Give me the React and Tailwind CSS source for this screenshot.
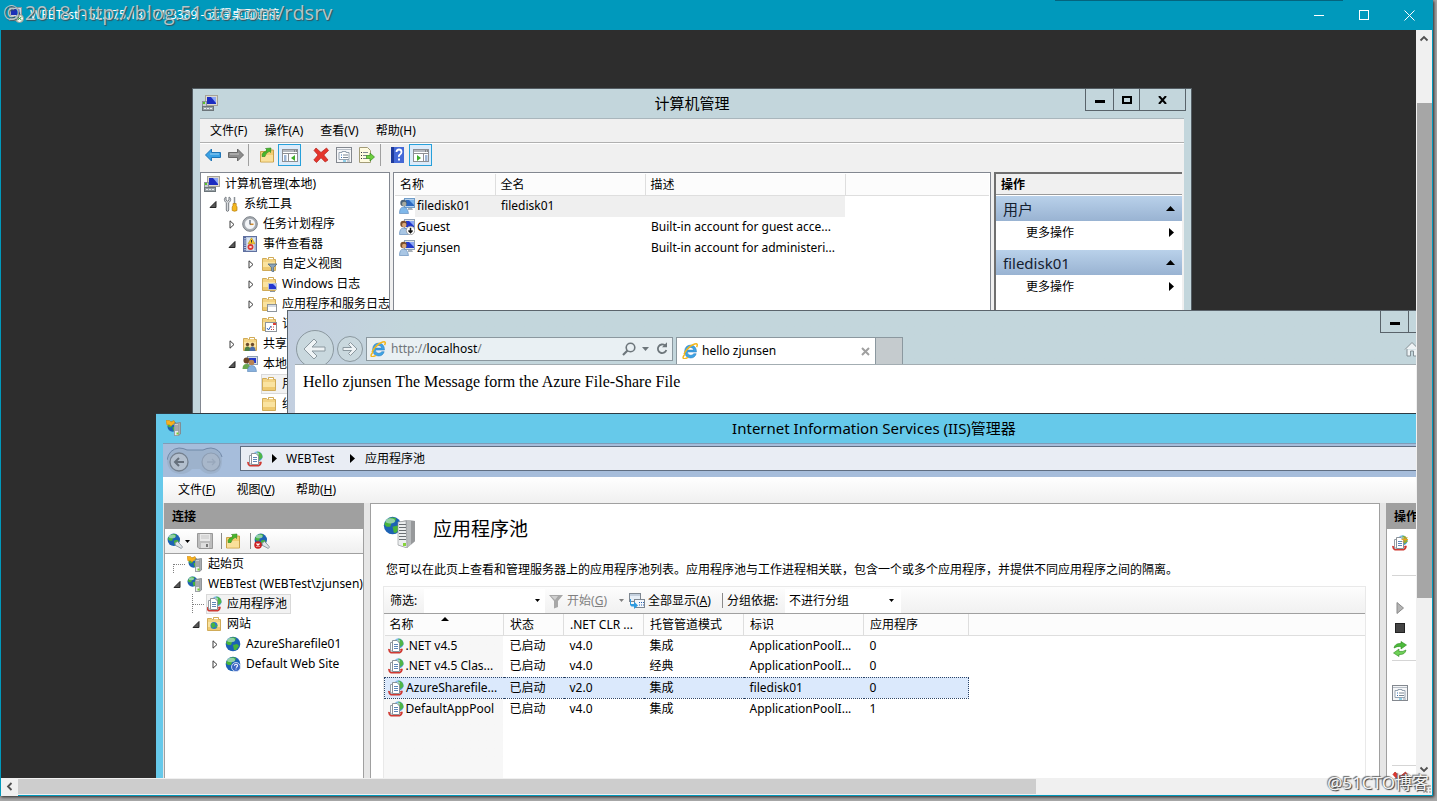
import React from "react";

/* ---------- icons ---------- */

function Svg({ size = 16, box = 16, children }) {
  return (
    <svg width={size} height={size} viewBox={`0 0 ${box} ${box}`} className="block shrink-0" aria-hidden="true">
      {children}
    </svg>
  );
}

const ComputerIcon = () => (
  <Svg>
    <rect x="3.500" y="0.500" width="12" height="10" fill="#dedacf" stroke="#a5a297" />
    <rect x="5" y="2" width="9" height="7" fill="#1c2cc0" />
    <path d="M9 2h5v6z" fill="#8fa8f4" />
    <rect x="0.500" y="6.500" width="4" height="5" fill="#c4cad0" stroke="#8b9297" />
    <rect x="1" y="7" width="2" height="2" fill="#58c22a" />
    <rect x="0.500" y="11.500" width="11" height="4" fill="#98a1a6" stroke="#6c757a" />
    <path d="M2 13.500h2M5 13.500h2M8 13.500h2" stroke="#e6ecef" />
  </Svg>
);

const RemoteIcon = () => (
  <Svg>
    <rect x="1.500" y="0.500" width="12" height="9" fill="#d7dbe0" stroke="#8b949e" />
    <rect x="3" y="2" width="9" height="6" fill="#1d2fb8" />
    <path d="M8 2h4v4z" fill="#9fb2f0" />
    <path d="M2 11h7l-1 3H1z" fill="#a4adb5" />
    <circle cx="11.500" cy="11.500" r="4" fill="#f4f6f2" stroke="#8c948c" />
    <path d="M9.500 10l2 1.500-2 1.500M13.500 10l-2 1.500 2 1.500" stroke="#2f9a32" fill="none" />
  </Svg>
);

const ToolsIcon = () => (
  <Svg>
    <path d="M3 1v3l1.500 1.200L6 4V1c2 .8 2.600 4-.3 5.600V14c0 1.800-2.400 1.800-2.400 0V6.600C.6 5 1 1.800 3 1z" fill="#d9dcdf" stroke="#777c82" />
    <path d="M11.500 1v7" stroke="#8a9096" strokeWidth="1.500" />
    <path d="M10 7.500h3.200v2L14 11v3.500q-2.400 1.500-4.800 0V11l.8-1.500z" fill="#f5b81f" stroke="#b57c0b" strokeWidth="0.700" />
  </Svg>
);

const ClockIcon = () => (
  <Svg>
    <circle cx="8" cy="8" r="7.300" fill="#a9aeb4" stroke="#7b8188" />
    <circle cx="8" cy="8" r="5.500" fill="#f3f5f8" stroke="#8d949b" strokeWidth="0.600" />
    <path d="M8 8.300h3.500" stroke="#d08a2a" fill="none" strokeWidth="1.500" />
    <path d="M8 4v4.500" stroke="#5b6470" strokeWidth="1.300" />
  </Svg>
);

const EventIcon = () => (
  <Svg>
    <rect x="1.500" y="0.500" width="13" height="15" fill="#b9c8e0" stroke="#5f70a0" />
    <path d="M3 1v14" stroke="#56669a" strokeWidth="2" strokeDasharray="1.200 1" />
    <path d="M5 2h8v12H5z" fill="#dbe5f2" />
    <path d="M9.500 1.800l3.500 6H6z" fill="#f7c92c" stroke="#b78f10" strokeWidth="0.600" />
    <path d="M9.500 4v2.500" stroke="#333" />
    <circle cx="8.500" cy="11" r="3" fill="#dc3a35" />
    <path d="M7.500 10l2 2m0-2l-2 2" stroke="#fff" />
    <path d="M12 9h2M12 11h2M12 13h2" stroke="#6e86b8" strokeWidth="0.700" />
  </Svg>
);

function FolderIcon({ kind }) {
  return (
    <Svg>
      <path d="M1.500 14.500v-12h4l1 1h1v-2h5v2h2v11z" fill="#f3d382" stroke="#d0ab58" />
      <path d="M8 2.500h4" stroke="#fff" />
      <path d="M2 6h12v8H2z" fill="#fae3a0" />
      <path d="M2 11h12v3H2z" fill="#efca70" />
      {kind === "filter" && <path d="M7 8h9l-3.400 3.500V16l-2.200-1.200v-3.300z" fill="#8aa2b8" stroke="#52697e" strokeWidth="0.800" />}
      {kind === "screen" && (
        <g>
          <rect x="7.500" y="7.500" width="8" height="6" fill="#2437cf" stroke="#b9c2cc" />
          <path d="M12 8h3v3z" fill="#a7b8f5" />
          <path d="M9 15.500h5" stroke="#8b949e" />
        </g>
      )}
      {kind === "window" && (
        <g>
          <rect x="6.500" y="8.500" width="9" height="7" fill="#fff" stroke="#8d949b" />
          <path d="M7 10h8" stroke="#aab6c6" />
        </g>
      )}
      {kind === "calendar" && (
        <g>
          <rect x="4.500" y="6.500" width="11" height="9" fill="#fff" stroke="#8d949b" />
          <path d="M12 8h3" stroke="#e04038" strokeWidth="2" />
          <path d="M6 12l1.500 2L10 10" stroke="#2c62b8" fill="none" />
          <path d="M10 11h1M12 11h1M10 13.500h1M12 13.500h1" stroke="#c04040" />
        </g>
      )}
      {kind === "people" && (
        <g>
          <circle cx="5.500" cy="8.500" r="1.700" fill="#6b4a2c" />
          <circle cx="10.500" cy="8.500" r="1.700" fill="#6b4a2c" />
          <path d="M2.500 15q0-4.500 3-4.500t3 4.500z" fill="#4b7f45" />
          <path d="M7.500 15q0-4.500 3-4.500t3 4.500z" fill="#4c6ea8" />
        </g>
      )}
      {kind === "globe" && (
        <g>
          <circle cx="8" cy="9.500" r="3.500" fill="#2b7cc8" />
          <path d="M5 8q3-3 4 0t-3 4zM9 10l2.500-1-1 3z" fill="#49b53c" />
        </g>
      )}
    </Svg>
  );
}

const UserIcon = ({ down, pale }) => (
  <Svg>
    <rect x="5.500" y="0.500" width="10" height="9" fill={pale ? "#b5d2ee" : "#dfe4ea"} stroke={pale ? "#6f9cc8" : "#8fa0b4"} />
    <rect x="7" y="2" width="8" height="6" fill={pale ? "#2c68c0" : "#2238cc"} />
    <path d="M10 2h5v5z" fill={pale ? "#7cb4ec" : "#8ea9f5"} />
    <path d="M9 10h4l1 2H9z" fill="#a8b0b8" />
    <circle cx="4.500" cy="5" r="3.200" fill={pale ? "#4c6378" : "#7a4e2c"} />
    <circle cx="5.200" cy="6" r="2.200" fill={pale ? "#a8aba0" : "#d9a777"} />
    <path d="M0.500 15.500q0-6.500 4-6.500t5 6.500z" fill={pale ? "#80b8ea" : "#a9c6e4"} stroke="#5583b5" strokeWidth="0.600" />
    {down && (
      <g>
        <circle cx="11.500" cy="11.500" r="4.200" fill="#fff" stroke="#8a8a8a" strokeWidth="0.700" />
        <path d="M11.500 8.800v4.500M9.500 11.500l2 2.200 2-2.200" stroke="#111" strokeWidth="1.500" fill="none" />
      </g>
    )}
  </Svg>
);

const UsersIcon = () => (
  <Svg>
    <rect x="5.500" y="0.500" width="10" height="8" fill="#d7dfe8" stroke="#8fa0b4" />
    <rect x="7" y="2" width="7" height="5" fill="#2238cc" />
    <circle cx="4.500" cy="4.500" r="3" fill="#6b4526" />
    <circle cx="9.500" cy="6.500" r="2.800" fill="#b98352" />
    <path d="M0.500 13q0-5 4-5t4 5z" fill="#6aa84f" />
    <path d="M5.500 15.500q0-6 4.200-6t4.800 6z" fill="#86b0de" stroke="#5583b5" strokeWidth="0.600" />
  </Svg>
);

const ArrowIcon = ({ color, edge, flip }) => (
  <Svg>
    <path
      d={flip ? "M15.500 8L9.500 2v3.500H.5v5h9V14z" : "M.5 8l6-6v3.500h9v5h-9V14z"}
      fill={color}
      stroke={edge}
    />
    <path d={flip ? "M2 7h9" : "M5 7h9"} stroke="#fff" opacity="0.500" />
  </Svg>
);

const FolderUpIcon = () => (
  <Svg>
    <path d="M1.500 15V4.500h5l1-1.500h7V15z" fill="#f2cd72" stroke="#c9a24a" />
    <path d="M2 8h12v6.500H2z" fill="#fae09a" />
    <path d="M3 9.500q0-5 4.500-5V2.500L6.500 1.500 12 1l-.5 4.500-1.200-1.200Q6.500 6 6 9.500z" fill="#46b82c" stroke="#2a851a" strokeWidth="0.600" />
  </Svg>
);

const PaneIcon = ({ right }) => (
  <Svg>
    <rect x="0.500" y="2.500" width="15" height="12" fill="#fff" stroke="#8d8f93" />
    <path d="M1 4h14" stroke="#b4b8be" strokeWidth="2" />
    <path d="M1 6.500h14" stroke="#8d8f93" />
    <path d="M12 4h1M14 4h1" stroke="#555" />
    {right ? (
      <g>
        <path d="M10.500 7v7" stroke="#8d8f93" />
        <path d="M12 9h2.500M12 11h2.500M12 13h2.500" stroke="#3d6fae" />
        <path d="M4 8l4 3-4 3z" fill="#3fae2a" />
      </g>
    ) : (
      <g>
        <path d="M6.500 7v7" stroke="#8d8f93" />
        <path d="M2 9h2.500M2 11h2.500M2 13h2.500" stroke="#3d6fae" />
        <path d="M13 8l-4 3 4 3z" fill="#3fae2a" />
      </g>
    )}
  </Svg>
);

const DeleteIcon = () => (
  <Svg>
    <path d="M3 1l5 4.500L13.500 1 15.500 3.500 10.800 8 15 13l-2.800 2L8 10.800 3.500 15.500 0.800 13 5 8 1 3.500z" fill="#e5352c" stroke="#b3241d" strokeWidth="0.700" />
  </Svg>
);

const PropsIcon = () => (
  <Svg>
    <rect x="0.500" y="0.500" width="15" height="15" fill="#f5f6f8" stroke="#83888f" />
    <path d="M1 2.500h14" stroke="#b9c0c8" />
    <path d="M3 5.500h3v-1h4v1h3v7H3z" fill="#fff" stroke="#8a98a8" strokeWidth="0.900" />
    <path d="M5 8h1M5 10.500h1" stroke="#2f6fb5" />
    <path d="M7 8h5M7 10.500h5" stroke="#7b8794" />
    <path d="M7 14h3" stroke="#2aa7d8" />
    <path d="M11 14h3" stroke="#9aa3ad" />
  </Svg>
);

const ExportIcon = () => (
  <Svg>
    <path d="M.5.500h8l3 3v12H.5z" fill="#fffbe0" stroke="#a39c78" />
    <path d="M2 5.500h1M2 8.500h1M2 11.500h1" stroke="#333" />
    <path d="M4 5.500h5M4 8.500h4M4 11.500h4" stroke="#7d8490" />
    <path d="M7.500 8.500H11V6l4.500 4-4.500 4v-2.500H7.500z" fill="#6ccf3d" stroke="#348a1a" strokeWidth="0.700" />
  </Svg>
);

const HelpIcon = () => (
  <Svg>
    <rect x="1" y="0" width="13" height="16" fill="#4468d6" />
    <rect x="1" y="0" width="3" height="16" fill="#1e3a9c" />
    <path d="M6.500 5q0-2.500 2.500-2.500T11.500 5q0 1.500-1.500 2.500T9 10" stroke="#fff" strokeWidth="1.800" fill="none" />
    <rect x="8" y="11.500" width="2" height="2" fill="#fff" />
  </Svg>
);

const IeIcon = () => (
  <Svg>
    <path d="M14.500 9H5.300q.4 3.300 3.500 3.300 1.900 0 2.800-1.600h2.600Q12.800 15 8.600 15 2.800 14.800 2.600 8.500 2.900 2.300 8.600 2.100q5.800.3 5.900 6.900zM5.400 7.100h6.300Q11.400 4.500 8.700 4.400 5.900 4.500 5.400 7.100z" fill="#3fa4e4" stroke="#2477bd" strokeWidth="0.500" fillRule="evenodd" />
    <path d="M3.200 10.700C-.8 15.500 1.300 17 6 14.300M2 11C4.500 6 9 2.300 12.700 1c3-.9 3 1 1.900 3.200" stroke="#f3b71b" strokeWidth="1.500" fill="none" />
  </Svg>
);

const Ball = () => (
  <g>
    <circle cx="8" cy="8" r="7.300" fill="#1c62b4" />
    <path d="M3 3q4-3 8-1l-1 3-3 1-1 3-3 0-2-2zM8 9l4-1 2 2-3 4-2 0z" fill="#47b43a" />
    <ellipse cx="6" cy="4" rx="4" ry="2.200" fill="#cdeafc" opacity="0.550" />
  </g>
);

const GlobeIcon = ({ help }) => (
  <Svg>
    <Ball />
    {help && (
      <g>
        <circle cx="11" cy="11" r="4.500" fill="#3c66c4" stroke="#e6edfa" strokeWidth="0.800" />
        <path d="M9.500 9.800q0-1.500 1.500-1.500t1.500 1.200-1.500 2" stroke="#fff" fill="none" strokeWidth="1.100" />
        <rect x="10.500" y="12.500" width="1" height="1" fill="#fff" />
      </g>
    )}
  </Svg>
);

const GlobePlugIcon = ({ off }) => (
  <Svg>
    <g transform="scale(0.850)">
      <Ball />
    </g>
    <path d="M8 10l2.500-1.500 2.500 2.500 2.500 3-1.200 1.500-3.300-1.800-2.500-1.200z" fill="#dfe4e8" stroke="#7f8a93" strokeWidth="0.800" />
    {off && (
      <g>
        <circle cx="4" cy="12" r="3.800" fill="#cf2020" />
        <path d="M2.500 10.500l3 3m0-3l-3 3" stroke="#fff" strokeWidth="1.300" />
      </g>
    )}
  </Svg>
);

const ServerIcon = () => (
  <Svg size={32} box={32}>
    <g transform="scale(1.200)">
      <Ball />
    </g>
    <path d="M15 6l9-2 8 1v20l-8 7-9-3z" fill="#a2a5a8" />
    <path d="M24 4l8 1v20l-8 7z" fill="#b9bcbe" />
    <path d="M28 5l4 0v20l-4 3.500z" fill="#97999b" />
    <path d="M15 6l8-1 1 27-9-3z" fill="#eceeef" stroke="#8d9194" strokeWidth="0.600" />
    <path d="M16 8.500h7M16 11.500h7M16 14.500h7M16 17.500h7M16 20.500h7M16 23.500h7" stroke="#6a6f73" />
    <rect x="20" y="27" width="3" height="3" fill="#86d43a" />
  </Svg>
);

const SmallServerIcon = ({ star }) => (
  <Svg>
    <g transform={star ? "translate(1 1) scale(0.700)" : "scale(0.700)"}>
      <Ball />
    </g>
    {star && (
      <path d="M0 .5h3.500L5 2l3-1.500L9 3 6.500 4.500 5 6 3.500 4.500 1 5z" fill="#f7b01e" stroke="#d68d0c" strokeWidth="0.600" />
    )}
    <path d="M8.500 3.500l6-1v11.500l-2 1.500h-4z" fill="#a9adb1" stroke="#7f8387" strokeWidth="0.800" />
    <path d="M8.500 4h4v11.500h-4z" fill="#e8eaec" stroke="#888d91" strokeWidth="0.600" />
    <path d="M9 6h3.200M9 8h3.200M9 10h3.200" stroke="#63686d" />
    <rect x="10.500" y="12.500" width="2" height="2" fill="#76cf2c" />
  </Svg>
);

const PoolIcon = ({ star }) => (
  <Svg>
    <circle cx="10.500" cy="5.500" r="5" fill="#4b9ddb" />
    <path d="M10.500 .5q5 1 5 6L12.500 9 10 4z" fill="#4fb648" />
    <ellipse cx="9" cy="2.800" rx="3" ry="1.500" fill="#d5ecfb" opacity="0.600" />
    <path d="M1 11q-.5 2.500 2 3.700h8.500q2.500-1 2.500-3.700" stroke="#cf3a33" strokeWidth="1.500" fill="none" />
    <path d="M.5 11.500l2.500-.5v3zM14.500 10.500l-2.500.5 1 3z" fill="#cf3a33" />
    <path d="M2.500 4.500h5v8.500h-5z" fill="#fff" stroke="#969da4" />
    <path d="M4.500 2.500h4.500l2.500 2.500v8.500h-7z" fill="#fff" stroke="#8b9299" />
    <path d="M6 6.500h4M6 8.500h4M6 10.500h4" stroke="#5f86b8" />
    {star && <path d="M13 1v7M9.500 4.500h7M10.500 2l5 5M15.500 2l-5 5" stroke="#f3a21a" strokeWidth="0.900" />}
  </Svg>
);

const SaveIcon = () => (
  <Svg>
    <path d="M.5.500h15v15H2L.5 14z" fill="#bdbdbd" stroke="#989898" />
    <rect x="3" y="1" width="10" height="7" fill="#e9e9e9" />
    <path d="M4 3h8M4 5h8" stroke="#c6c6c6" />
    <rect x="4" y="10" width="8" height="5" fill="#dedede" />
    <rect x="9" y="11" width="2" height="3" fill="#777" />
  </Svg>
);

const FunnelIcon = () => (
  <Svg>
    <path d="M1 2h14l-5 6v6l-4 1.500V8z" fill="#a7a7a7" />
    <path d="M3 3h7L7 7z" fill="#cfcfcf" />
  </Svg>
);

const ShowAllIcon = () => (
  <Svg>
    <rect x="0.500" y="0.500" width="11" height="8" fill="#e6eef7" stroke="#7e8791" />
    <path d="M1 2h10" stroke="#9fb0c4" />
    <rect x="5.500" y="6.500" width="10" height="8" fill="#f5f8fc" stroke="#7e8791" />
    <path d="M10 9.500h1M12 9.500h1M14 9.500h1M10 12h1M12 12h1M14 12h1" stroke="#2a62b0" />
    <path d="M2 6v5h3V8.500l4 4L5 16v-2.500H2.500L1 12V6z" fill="#2f9be0" />
  </Svg>
);

const RecycleIcon = () => (
  <Svg>
    <path d="M2 7q1-5 7-4.500L9 .5 14.500 4 9 8V5.500Q5 5 2 7z" fill="#4cba3a" stroke="#2c8a1f" strokeWidth="0.600" />
    <path d="M14 9q-1 5-7 4.500v2L1.500 12 7 8v2.500q4 .5 7-1.500z" fill="#6fd157" stroke="#2c8a1f" strokeWidth="0.600" />
  </Svg>
);

const Caret = ({ color = "#000" }) => (
  <svg width="5" height="3" viewBox="0 0 5 3" className="block shrink-0" aria-hidden="true">
    <path d="M0 0h5L2.500 3z" fill={color} />
  </svg>
);
const UpTri = () => (
  <svg width="9" height="5" viewBox="0 0 9 5" className="block shrink-0" aria-hidden="true">
    <path d="M0 5L4.500 0 9 5z" fill="#000" />
  </svg>
);
const RightTri = () => (
  <svg width="5" height="9" viewBox="0 0 5 9" className="block shrink-0" aria-hidden="true">
    <path d="M0 0l5 4.500L0 9z" fill="#000" />
  </svg>
);

function Twisty({ state }) {
  if (!state) return null;
  return (
    <svg width="8" height="9" viewBox="0 0 8 9" className="block" aria-hidden="true">
      {state === "open" ? (
        <path d="M7 1.500v6H1z" fill="#595959" stroke="#262626" />
      ) : (
        <path d="M2 .8v7.400l4-3.700z" fill="#fff" stroke="#3c3c3c" />
      )}
    </svg>
  );
}

/* ---------- shared pieces ---------- */

const indents = ["pl-[3px]", "pl-[22px]", "pl-[41px]", "pl-[60px]"];

function TreeRow({ depth, twisty, noSlot, icon, label, selected, dotted }) {
  return (
    <li className={`flex h-5 items-center whitespace-nowrap ${indents[depth]}`}>
      {!noSlot && (
        <span className="flex w-[19px] shrink-0 items-center">
          <span className="flex w-[18px] justify-center">
            {twisty ? (
              <Twisty state={twisty} />
            ) : dotted ? (
              <svg width="12" height="20" viewBox="0 0 12 20" className="ml-1 block" aria-hidden="true">
                <path d={dotted === "first" ? "M.5 10v10M1 10.500h11" : "M.5 0v20M1 10.500h11"} stroke="#808080" strokeDasharray="1 1" fill="none" />
              </svg>
            ) : null}
          </span>
        </span>
      )}
      <button
        type="button"
        className={`flex h-5 items-center gap-[5px] pr-1 ${selected ? "bg-[#f2f2f2] outline outline-1 -outline-offset-1 outline-[#d9d9d9]" : ""}`}
      >
        {icon}
        <span>{label}</span>
      </button>
    </li>
  );
}

function ToolButton({ label, active, children }) {
  return (
    <button
      type="button"
      aria-label={label}
      className={`flex h-[22px] w-[23px] shrink-0 items-center justify-center ${active ? "border border-[#26a0da] bg-[#dcebfa]" : ""}`}
    >
      {children}
    </button>
  );
}

function CaptionButtons({ edge }) {
  return (
    <div className={`flex h-[22px] self-start justify-self-end border-x border-b ${edge}`}>
      <button type="button" aria-label="最小化" className={`flex w-[28px] items-center justify-center border-r ${edge}`}>
        <span className="mt-1 h-[3px] w-[10px] bg-black" />
      </button>
      <button type="button" aria-label="最大化" className={`flex w-[26px] items-center justify-center border-r ${edge}`}>
        <span className="h-2 w-[10px] border-2 border-black" />
      </button>
      <button type="button" aria-label="关闭" className="flex w-[45px] items-center justify-center">
        <svg width="9" height="8" viewBox="0 0 9 8" aria-hidden="true">
          <path d="M1 0l7 8M8 0L1 8" stroke="#000" strokeWidth="2" />
        </svg>
      </button>
    </div>
  );
}

/* ---------- computer management ---------- */

const manageTree = [
  { depth: 0, noSlot: true, icon: <ComputerIcon />, label: "计算机管理(本地)" },
  { depth: 0, twisty: "open", icon: <ToolsIcon />, label: "系统工具" },
  { depth: 1, twisty: "closed", icon: <ClockIcon />, label: "任务计划程序" },
  { depth: 1, twisty: "open", icon: <EventIcon />, label: "事件查看器" },
  { depth: 2, twisty: "closed", icon: <FolderIcon kind="filter" />, label: "自定义视图" },
  { depth: 2, twisty: "closed", icon: <FolderIcon kind="screen" />, label: "Windows 日志" },
  { depth: 2, twisty: "closed", icon: <FolderIcon kind="window" />, label: "应用程序和服务日志" },
  { depth: 2, icon: <FolderIcon kind="calendar" />, label: "订阅" },
  { depth: 1, twisty: "closed", icon: <FolderIcon kind="people" />, label: "共享文件夹" },
  { depth: 1, twisty: "open", icon: <UsersIcon />, label: "本地用户和组" },
  { depth: 2, icon: <FolderIcon />, label: "用户", selected: true },
  { depth: 2, icon: <FolderIcon />, label: "组" },
];

const users = [
  { name: "filedisk01", full: "filedisk01", text: "", on: true },
  { name: "Guest", full: "", text: "Built-in account for guest acce...", down: true },
  { name: "zjunsen", full: "", text: "Built-in account for administeri..." },
];

function ManagementWindow() {
  return (
    <section className="absolute left-[191px] top-[58px] flex h-[420px] w-[1000px] flex-col border border-[#535c62] bg-[#c3d6dc] pb-[7px]">
      <header className="grid h-[29px] grid-cols-[1fr_auto_1fr] items-center px-[5px] pb-[2px]">
        <span className="pl-1"><ComputerIcon /></span>
        <h2 className="text-[15px] leading-5">计算机管理</h2>
        <CaptionButtons edge="border-[#59636a]" />
      </header>
      <div className="mx-[7px] flex min-h-0 flex-1 flex-col border-t border-[#a9b6bc] bg-[#f0f0f0]">
        <nav className="flex h-[24px] items-center gap-px border-b border-[#b0b0b0] pl-[2px]">
          {["文件(F)", "操作(A)", "查看(V)", "帮助(H)"].map((m) => (
            <button key={m} type="button" className="px-2">{m}</button>
          ))}
        </nav>
        <div className="flex h-[29px] shrink-0 items-start border-t border-white pl-px">
          <ToolButton label="后退"><ArrowIcon color="#38a0e4" edge="#1e74b6" /></ToolButton>
          <ToolButton label="前进"><ArrowIcon flip color="#8c8c8c" edge="#686868" /></ToolButton>
          <span className="ml-px mr-[6px] h-[22px] w-px bg-[#a0a0a0]" />
          <ToolButton label="上一级"><FolderUpIcon /></ToolButton>
          <ToolButton label="显示控制台树" active><PaneIcon /></ToolButton>
          <span className="w-2" />
          <ToolButton label="删除"><DeleteIcon /></ToolButton>
          <ToolButton label="属性"><PropsIcon /></ToolButton>
          <ToolButton label="导出列表"><ExportIcon /></ToolButton>
          <span className="ml-[2px] mr-[5px] h-[22px] w-px bg-[#a0a0a0]" />
          <ToolButton label="帮助"><HelpIcon /></ToolButton>
          <ToolButton label="显示操作窗格" active><PaneIcon right /></ToolButton>
        </div>
        <div className="flex min-h-0 flex-1 gap-[3px] pr-[2px]">
          <ul className="w-[190px] shrink-0 overflow-hidden border border-[#828790] bg-white pt-px">
            {manageTree.map((r) => (
              <TreeRow key={r.label} {...r} />
            ))}
          </ul>
          <div className="flex-1 overflow-hidden border border-[#828790] bg-white px-px pt-px">
            <table className="w-full table-fixed border-collapse text-left">
              <colgroup>
                <col className="w-[100px]" />
                <col className="w-[150px]" />
                <col className="w-[200px]" />
                <col />
              </colgroup>
              <thead>
                <tr className="h-[21px] border-b border-[#dedede] bg-[#fcfcfc]">
                  {["名称", "全名", "描述"].map((h) => (
                    <th key={h} className="border-r border-[#dedede] pl-[5px] pt-[2px] font-normal">{h}</th>
                  ))}
                  <td />
                </tr>
              </thead>
              <tbody>
                {users.map((u) => (
                  <tr key={u.name} className="h-[21px] whitespace-nowrap">
                    <td className="pl-1">
                      <div className="flex h-[21px] items-center">
                        <UserIcon down={u.down} pale={u.on} />
                        <span className={`flex h-full flex-1 items-center pl-[2px] ${u.on ? "bg-[#efefef]" : ""}`}>{u.name}</span>
                      </div>
                    </td>
                    <td className={`pl-[6px] ${u.on ? "bg-[#efefef]" : ""}`}>{u.full}</td>
                    <td className={`pl-[6px] ${u.on ? "bg-[#efefef]" : ""}`}>{u.text}</td>
                    <td />
                  </tr>
                ))}
              </tbody>
            </table>
          </div>
          <aside className="w-[188px] shrink-0 border-l-2 border-t-2 border-[#6f6f6f] bg-white">
            <h3 className="flex h-[21px] items-center border-b border-[#9a9a9a] bg-[#f0f0f0] pl-[5px] pt-px font-bold">操作</h3>
            {["用户", "filedisk01"].map((s) => (
              <div key={s} className="flex h-[54px] flex-col first-of-type:mt-px">
                <button type="button" className="flex h-[25px] items-center justify-between bg-linear-to-b from-[#b9d1ea] to-[#99b3d2] px-[7px] text-[15px] leading-5 text-[#14202f]">
                  {s}
                  <UpTri />
                </button>
                <button type="button" className="flex h-[23px] items-center justify-between pl-[30px] pr-2">
                  更多操作
                  <RightTri />
                </button>
              </div>
            ))}
          </aside>
        </div>
      </div>
    </section>
  );
}

/* ---------- browser ---------- */

function BrowserWindow() {
  return (
    <section className="absolute left-[286px] top-[280px] flex h-[240px] w-[1200px] flex-col border border-[#5b646c] bg-linear-to-r from-[#c3cfe0] via-[#c3d6dc] via-10% to-[#c3d6dc] pl-[7px]">
      <header className="grid h-[22px] shrink-0 grid-cols-[1fr_auto] pr-[5px]">
        <span />
        <CaptionButtons edge="border-[#59636a]" />
      </header>
      <div className="flex h-8 shrink-0 items-end border-b border-[#a3adb2]">
        <button type="button" aria-label="后退" className="h-[34px] w-[41px] shrink-0">
          <svg width="41" height="34" viewBox="0 0 41 34" aria-hidden="true">
            <circle cx="20" cy="19" r="18.500" fill="#c9d8de" stroke="#8b989f" />
            <path d="M9 19l10-10 3 3-5 5h13v4H17l5 5-3 3z" fill="#eef3f5" stroke="#8b989f" />
          </svg>
        </button>
        <button type="button" aria-label="前进" className="h-[34px] w-[28px] shrink-0">
          <svg width="28" height="34" viewBox="0 0 28 34" aria-hidden="true">
            <circle cx="14" cy="19" r="12.500" fill="#c9d8de" stroke="#8b989f" />
            <path d="M21 19l-6.500-6.500-2 2 3 3H7v3h8.500l-3 3 2 2z" fill="#eef3f5" stroke="#8b989f" />
          </svg>
        </button>
        <div className="mb-[3px] ml-[2px] flex h-6 w-[307px] shrink-0 items-center border border-[#8b989f] bg-[#e9f0f3] px-[3px] text-[#6f7579]">
          <IeIcon />
          <span className="flex-1 pl-[5px]">http://<span className="text-black">localhost</span>/</span>
          <span className="flex items-center gap-[6px]">
            <svg width="14" height="14" viewBox="0 0 14 14" aria-hidden="true">
              <circle cx="8.500" cy="5.500" r="4.300" fill="none" stroke="#6d767b" strokeWidth="1.600" />
              <path d="M5.500 8.500L1 13" stroke="#6d767b" strokeWidth="2.200" />
            </svg>
            <svg width="7" height="4" viewBox="0 0 7 4" aria-hidden="true"><path d="M0 0h7L3.500 4z" fill="#6d767b" /></svg>
            <svg width="14" height="14" viewBox="0 0 14 14" aria-hidden="true">
              <path d="M10 3.500A4.300 4.300 0 1 0 11.300 8" fill="none" stroke="#6d767b" strokeWidth="1.800" />
              <path d="M7 5.200h5V.2z" fill="#6d767b" />
            </svg>
          </span>
        </div>
        <div className="ml-[3px] flex h-[27px] w-[200px] shrink-0 items-center gap-1 border border-b-0 border-[#8b989f] bg-white px-[5px]">
          <IeIcon />
          <span className="flex-1">hello zjunsen</span>
          <button type="button" aria-label="关闭选项卡">
            <svg width="9" height="9" viewBox="0 0 9 9" aria-hidden="true"><path d="M1 1l7 7M8 1L1 8" stroke="#a0a0a0" strokeWidth="2" /></svg>
          </button>
        </div>
        <button type="button" aria-label="新建选项卡" className="h-[27px] w-[27px] shrink-0 border border-b-0 border-l-0 border-[#8b989f] bg-[#c5cbce]" />
        <span className="flex-1" />
        <button type="button" aria-label="主页" className="mb-[7px] mr-[66px]">
          <svg width="16" height="16" viewBox="0 0 16 16" aria-hidden="true">
            <path d="M1 8.500L8 1.500l7 7M3 8v7h3.500v-5h3v5H13V8" fill="#eef3f5" stroke="#848f95" />
          </svg>
        </button>
      </div>
      <div className="flex-1 bg-white p-2 font-['Liberation_Serif',serif] text-base leading-[18px]">
        Hello zjunsen The Message form the Azure File-Share File
      </div>
    </section>
  );
}

/* ---------- IIS manager ---------- */

const iisTree = [
  { depth: 0, dotted: "first", icon: <SmallServerIcon star />, label: "起始页" },
  { depth: 0, twisty: "open", icon: <SmallServerIcon />, label: "WEBTest (WEBTest\\zjunsen)" },
  { depth: 1, dotted: "mid", icon: <PoolIcon />, label: "应用程序池", selected: true },
  { depth: 1, twisty: "open", icon: <FolderIcon kind="globe" />, label: "网站" },
  { depth: 2, twisty: "closed", icon: <GlobeIcon />, label: "AzureSharefile01" },
  { depth: 2, twisty: "closed", icon: <GlobeIcon help />, label: "Default Web Site" },
];

const pools = [
  [".NET v4.5", "已启动", "v4.0", "集成", "ApplicationPoolI...", "0"],
  [".NET v4.5 Clas...", "已启动", "v4.0", "经典", "ApplicationPoolI...", "0"],
  ["AzureSharefile...", "已启动", "v2.0", "集成", "filedisk01", "0"],
  ["DefaultAppPool", "已启动", "v4.0", "集成", "ApplicationPoolI...", "1"],
];

function AccessKey({ text, k }) {
  return (
    <span>
      {text}(<u>{k}</u>)
    </span>
  );
}

function IisWindow() {
  return (
    <section className="absolute left-[155px] top-[383px] flex h-[480px] w-[1436px] flex-col border-t border-[#2d3a42] bg-[#66c9ea] px-[7px]">
      <header className="grid h-[29px] shrink-0 grid-cols-[1fr_auto_1fr] items-center pb-[2px]">
        <span className="pl-[3px]"><SmallServerIcon star /></span>
        <h2 className="text-[15px] leading-5">Internet Information Services (IIS)管理器</h2>
        <span />
      </header>
      <div className="flex min-h-0 flex-1 flex-col border-t border-[#7f9cb8] bg-[#f0f0f0]">
        <div className="flex h-[33px] shrink-0 items-center bg-[#a6bddb] pl-1">
          <div className="flex w-[73px]">
            <svg width="60" height="28" viewBox="0 0 60 28" aria-hidden="true">
              <path d="M13 1Q1 2 0 14q1 12 13 13q8 0 12-5h8q4 5 11 5 11-1 11-13T44 1q-5 0-9 2H22q-4-2-9-2z" fill="#9aaec6" opacity="0.700" />
              <path d="M0 13Q2 2 12 1q4 0 8 2h16q4-2 8-2 9 1 11 9" fill="none" stroke="#7189a8" />
              <circle cx="12" cy="15" r="9" fill="#b3bfcd" stroke="#75818f" strokeWidth="1.300" />
              <path d="M8 15h9M12 11l-4 4 4 4" stroke="#66707c" strokeWidth="2" fill="none" />
              <circle cx="44" cy="15" r="9" fill="#a8b7ca" stroke="#8d9db2" strokeWidth="1.200" />
              <path d="M40 15h8M45 12l3 3-3 3" stroke="#98a8bc" strokeWidth="1.300" fill="none" />
            </svg>
          </div>
          <nav className="mb-1 flex h-[25px] flex-1 items-center border border-[#5f6e82] bg-[#e9edf4] pl-[6px]">
            <PoolIcon />
            <span className="flex w-[23px] justify-center"><RightTri /></span>
            <a href="#webtest" className="w-[64px]">WEBTest</a>
            <RightTri />
            <a href="#pools" className="ml-[10px]">应用程序池</a>
          </nav>
        </div>
        <nav className="flex h-[26px] shrink-0 items-center gap-px bg-linear-to-b from-white to-[#f0f0f0] pl-[5px]">
          {[["文件", "F"], ["视图", "V"], ["帮助", "H"]].map(([t, k]) => (
            <button key={t} type="button" className="px-[10px]"><AccessKey text={t} k={k} /></button>
          ))}
        </nav>
        <div className="flex min-h-0 flex-1 bg-[#e6e6e6] pl-px">
          <div className="flex w-[200px] shrink-0 flex-col border-x border-[#a0a0a0] bg-white">
            <h3 className="flex h-[26px] shrink-0 items-center bg-[#a0a0a0] pl-[7px] pt-px font-bold">连接</h3>
            <div className="flex h-[25px] shrink-0 items-center border-b border-[#a0a0a0] bg-linear-to-b from-white to-[#efefef] pl-[2px]">
              <button type="button" aria-label="连接" className="flex w-[30px] items-center gap-[2px]"><GlobePlugIcon /><Caret /></button>
              <button type="button" aria-label="保存" className="w-[24px]"><SaveIcon /></button>
              <span className="h-4 w-1 border-l border-[#8a8a8a]" />
              <button type="button" aria-label="上一级" className="w-[25px]"><FolderUpIcon /></button>
              <span className="h-4 w-1 border-l border-[#8a8a8a]" />
              <button type="button" aria-label="断开"><GlobePlugIcon off /></button>
            </div>
            <ul className="overflow-hidden">
              {iisTree.map((r) => (
                <TreeRow key={r.label} {...r} />
              ))}
            </ul>
          </div>
          <main className="ml-[6px] flex w-[1010px] shrink-0 flex-col border border-[#a0a0a0] bg-white pl-3 pr-[13px]">
            <div className="mt-[11px] flex h-[34px] items-center gap-[18px]">
              <ServerIcon />
              <h1 className="mb-[6px] text-[19px] leading-6">应用程序池</h1>
            </div>
            <p className="mb-[7px] mt-[12px] h-[18px] whitespace-nowrap pl-[3px] leading-[18px]">
              您可以在此页上查看和管理服务器上的应用程序池列表。应用程序池与工作进程相关联，包含一个或多个应用程序，并提供不同应用程序之间的隔离。
            </p>
            <div className="flex min-h-0 flex-1 flex-col border border-b-0 border-[#e9e9e9]">
              <div className="flex h-[27px] shrink-0 items-center border-b border-[#a0a0a0] bg-linear-to-b from-[#fdfdfd] to-[#f1f1f1] pl-[6px] pt-px">
                <label htmlFor="filter" className="w-[34px]">筛选:</label>
                <div className="flex h-6 w-[121px] items-center bg-white">
                  <input id="filter" type="text" className="h-6 w-[111px] bg-transparent px-1 outline-none" />
                  <Caret />
                </div>
                <button type="button" className="ml-[3px] flex items-center gap-[3px] text-[#808080]">
                  <FunnelIcon />
                  <AccessKey text="开始" k="G" />
                  <span className="ml-[9px] mr-[5px]"><Caret color="#808080" /></span>
                </button>
                <button type="button" className="flex items-center gap-[3px]">
                  <ShowAllIcon />
                  <AccessKey text="全部显示" k="A" />
                </button>
                <span className="ml-[11px] h-[15px] w-[5px] border-l border-[#8a8a8a]" />
                <label htmlFor="group" className="w-[58px]">分组依据:</label>
                <div className="flex h-6 w-[116px] items-center bg-white">
                  <select id="group" className="h-6 w-[104px] appearance-none bg-transparent pl-1 outline-none" defaultValue="none">
                    <option value="none">不进行分组</option>
                  </select>
                  <Caret />
                </div>
              </div>
              <div className="flex-1 bg-linear-to-r from-[#f7f7f7] from-[119px] to-white to-[119px]">
                <table className="w-full table-fixed border-collapse text-left">
                  <colgroup>
                    <col className="w-[119px]" />
                    <col className="w-[60px]" />
                    <col className="w-[80px]" />
                    <col className="w-[100px]" />
                    <col className="w-[120px]" />
                    <col className="w-[105px]" />
                    <col />
                  </colgroup>
                  <thead>
                    <tr className="h-[21px] border-b border-[#dedede] bg-[#fcfcfc]">
                      {["名称", "状态", ".NET CLR ...", "托管管道模式", "标识", "应用程序"].map((h, i) => (
                        <th key={h} className={`relative border-r border-[#dedede] pt-[2px] font-normal ${i === 0 ? "pl-[5px]" : "pl-[6px]"}`}>
                          {h}
                          {i === 0 && (
                            <svg width="8" height="4" viewBox="0 0 8 4" className="absolute left-[56px] top-[3px]" aria-hidden="true">
                              <path d="M0 4l4-4 4 4z" fill="#000" />
                            </svg>
                          )}
                        </th>
                      ))}
                      <td />
                    </tr>
                  </thead>
                  <tbody>
                    {pools.map((row) => {
                      const on = row[0] === "AzureSharefile...";
                      const skin = on ? "border-y border-dotted border-[#2c4568] bg-[#dbe9fc]" : "";
                      return (
                        <tr key={row[0]} className="h-[21px] whitespace-nowrap">
                          {row.map((c, i) => (
                            <td key={i} className={`${i === 0 ? "pl-[3px]" : "pl-[6px]"} ${skin} ${on && i === 0 ? "border-l" : ""} ${on && i === 5 ? "border-r" : ""}`}>
                              {i === 0 ? (
                                <div className="flex items-center gap-[2px]"><PoolIcon />{c}</div>
                              ) : (
                                c
                              )}
                            </td>
                          ))}
                          <td />
                        </tr>
                      );
                    })}
                  </tbody>
                </table>
              </div>
            </div>
          </main>
          <aside className="ml-[6px] flex flex-1 flex-col border-l border-[#a0a0a0] bg-white">
            <h3 className="flex h-[26px] shrink-0 items-center bg-[#a0a0a0] pl-[7px] pt-px font-bold">操作</h3>
            <div className="flex flex-col pl-[5px]">
              <button type="button" aria-label="添加应用程序池" className="flex h-[47px] items-start border-b border-[#d5d5d5] pt-[6px]"><PoolIcon star /></button>
              <button type="button" aria-label="启动" className="mt-[22px] flex h-5 items-center">
                <Svg><path d="M5 2.500v11l6.500-5.500z" fill="#b4b4b4" stroke="#8a8a8a" /></Svg>
              </button>
              <button type="button" aria-label="停止" className="flex h-5 items-center">
                <Svg><rect x="3.500" y="3.500" width="9" height="9" fill="#444" stroke="#222" /></Svg>
              </button>
              <button type="button" aria-label="回收" className="flex h-[23px] items-center border-b border-[#d5d5d5]"><RecycleIcon /></button>
              <button type="button" aria-label="高级设置" className="flex h-[105px] items-start border-b border-[#d5d5d5] pt-[24px]"><PropsIcon /></button>
              <button type="button" aria-label="删除" className="pt-[5px]"><DeleteIcon /></button>
            </div>
          </aside>
        </div>
      </div>
    </section>
  );
}

/* ---------- remote session frame ---------- */

function Chevron({ d }) {
  return (
    <svg width="17" height="17" viewBox="0 0 17 17" className="block shrink-0 bg-[#f0f0f0]" aria-hidden="true">
      <path d={d} fill="none" stroke="#505050" strokeWidth="1.800" />
    </svg>
  );
}

export default function App() {
  return (
    <div className="relative flex h-screen w-full flex-col overflow-hidden bg-[#a8a8a8] pb-[5px] pr-1 font-['Noto_Sans','Noto_Sans_CJK_SC',sans-serif] text-[12px] leading-4 text-black">
      <div className="flex min-h-0 flex-1 flex-col border border-t-0 border-[#0099bc] bg-[#f0f0f0] shadow-[1px_1px_3px_#222]">
        <header className="relative flex h-[30px] shrink-0 items-center bg-[#0099bc] pl-[7px] text-white">
          <RemoteIcon />
          <h1 className="flex-1 pl-[6px]">WEBTest - 52.175.13.171:3389 - 远程桌面连接</h1>
          <button type="button" aria-label="最小化" className="flex w-[45px] justify-center"><span className="h-px w-[10px] bg-white" /></button>
          <button type="button" aria-label="最大化" className="flex w-[45px] justify-center"><span className="size-[10px] border border-white" /></button>
          <button type="button" aria-label="关闭" className="flex w-[46px] justify-center">
            <svg width="11" height="11" viewBox="0 0 11 11" aria-hidden="true"><path d="M.5.500l10 10M10.500.500l-10 10" stroke="#fff" /></svg>
          </button>
          <span className="absolute right-[89px] top-0 h-px w-[288px] bg-[#04647e]" />
          <span className="absolute left-[2px] top-0 whitespace-nowrap font-['Open_Sans',sans-serif] text-[20px] leading-[26px] text-[#b4c4c8] [text-shadow:1px_1px_1px_#35525c]">
            © 2018 http://blog.51cto.com/rdsrv
          </span>
        </header>
        <div className="flex min-h-0 flex-1">
          <div className="relative min-w-0 flex-1 overflow-hidden bg-[#2d2d2d]">
            <ManagementWindow />
            <BrowserWindow />
            <IisWindow />
          </div>
          <div className="flex w-4 shrink-0 flex-col overflow-hidden">
            <Chevron d="M4.500 10.500L8 7l3.500 3.500" />
            <span className="grow-[56]" />
            <span className="ml-px grow-[495] bg-[#a6a6a6]" />
            <span className="grow-[163]" />
            <Chevron d="M4.500 6.500L8 10l3.500-3.500" />
          </div>
        </div>
        <div className="flex h-[17px] shrink-0 py-px">
          <Chevron d="M10.500 4L7 7.500l3.500 3.500" />
          <span className="grow-[1018] bg-[#cdcdcd]" />
          <span className="grow-[363]" />
          <span className="flex w-[33px] items-end justify-end pb-px pr-px">
            <svg width="8" height="8" viewBox="0 0 8 8" aria-hidden="true">
              <path d="M6 0h2v2H6zM3 3h2v2H3zM6 3h2v2H6zM0 6h2v2H0zM3 6h2v2H3zM6 6h2v2H6z" fill="#bdbdbd" />
            </svg>
          </span>
        </div>
      </div>
      <span className="absolute bottom-[6px] right-2 whitespace-nowrap text-[17px] leading-6 text-[#f4f4f4] [text-shadow:1px_1px_1px_#333,-1px_-1px_1px_#666]">
        @51CTO博客
      </span>
    </div>
  );
}
